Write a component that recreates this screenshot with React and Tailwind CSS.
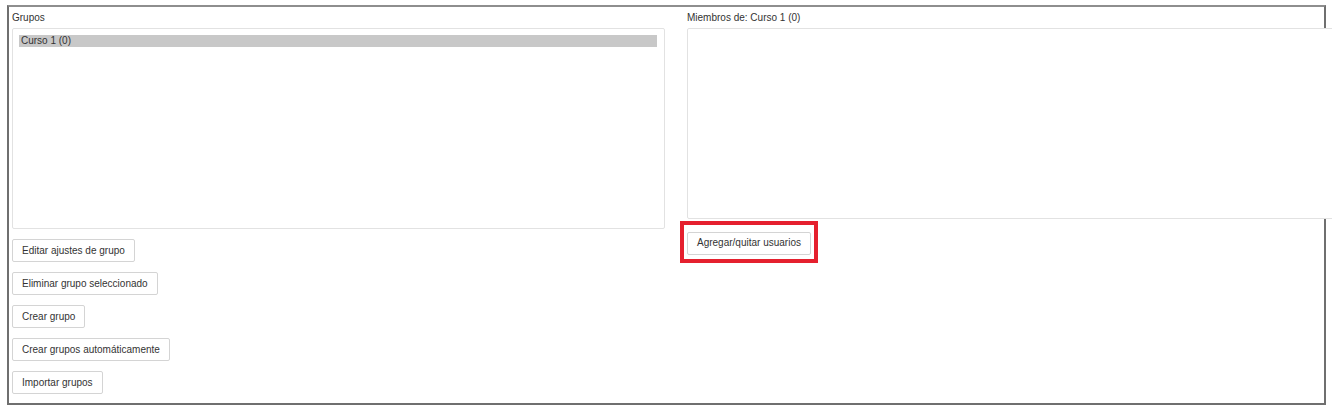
import React from 'react';

const leftActions = [
  'Editar ajustes de grupo',
  'Eliminar grupo seleccionado',
  'Crear grupo',
  'Crear grupos automáticamente',
  'Importar grupos',
];

function ActionButton({ children }) {
  return (
    <button className="h-[23px] px-[9px] bg-white border border-[#d4d4d4] rounded-[2px] text-[10px] leading-none text-[#333] whitespace-nowrap">
      {children}
    </button>
  );
}

export default function App() {
  return (
    <div className="min-h-screen bg-white pt-[5px] pl-[7px] font-['Liberation_Sans',Arial,sans-serif]">
      {/* Outer frame */}
      <div className="w-[1319px] h-[400px] border-2 border-[#6f6f6f] border-t-[#8e8e8e] pl-[3px] pt-[4px] flex">
        {/* Grupos */}
        <div className="w-[653px] shrink-0 flex flex-col">
          <div className="text-[10px] leading-[14px] text-[#333] h-[15px]">Grupos</div>
          <div className="mt-[2px] h-[201px] border border-[#e2e2e2] rounded-[2px] p-[6px] pr-[7px]">
            <div className="h-[12px] bg-[#c8c8c8] pl-[2px] text-[10px] leading-[12px] text-[#333]">
              Curso 1 (0)
            </div>
          </div>
          <div className="mt-[10px] flex flex-col items-start gap-[10px]">
            {leftActions.map((label) => (
              <ActionButton key={label}>{label}</ActionButton>
            ))}
          </div>
        </div>

        {/* Miembros */}
        <div className="ml-[22px] w-[650px] shrink-0 flex flex-col">
          <div className="text-[10px] leading-[14px] text-[#333] h-[15px]">Miembros de: Curso 1 (0)</div>
          <div className="mt-[2px] h-[191px] border border-[#e2e2e2] rounded-[2px] bg-white" />
          <div className="mt-[2px] -ml-[7px] self-start border-4 border-[#e5202e] px-[3px] py-[4px]">
            <ActionButton>Agregar/quitar usuarios</ActionButton>
          </div>
        </div>
      </div>
    </div>
  );
}
